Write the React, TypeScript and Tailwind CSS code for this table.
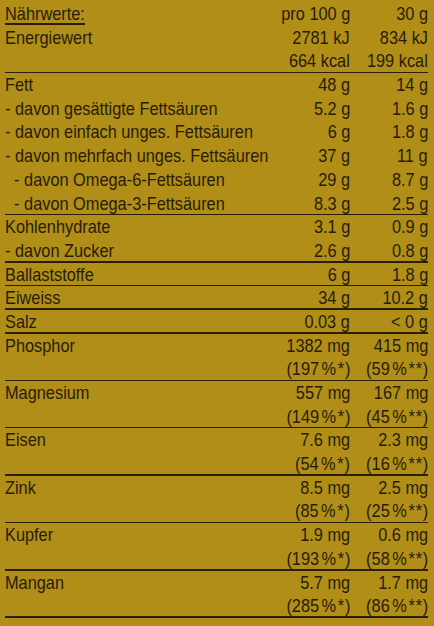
const rows: [string, string, string][][] = [
  [["Energiewert", "2781 kJ", "834 kJ"], ["", "664 kcal", "199 kcal"]],
  [
    ["Fett", "48 g", "14 g"],
    ["- davon gesättigte Fettsäuren", "5.2 g", "1.6 g"],
    ["- davon einfach unges. Fettsäuren", "6 g", "1.8 g"],
    ["- davon mehrfach unges. Fettsäuren", "37 g", "11 g"],
    ["  - davon Omega-6-Fettsäuren", "29 g", "8.7 g"],
    ["  - davon Omega-3-Fettsäuren", "8.3 g", "2.5 g"],
  ],
  [["Kohlenhydrate", "3.1 g", "0.9 g"], ["- davon Zucker", "2.6 g", "0.8 g"]],
  [["Ballaststoffe", "6 g", "1.8 g"]],
  [["Eiweiss", "34 g", "10.2 g"]],
  [["Salz", "0.03 g", "< 0 g"]],
];

const minerals = [
  ["Phosphor", "1382 mg", "415 mg", "197", "59"],
  ["Magnesium", "557 mg", "167 mg", "149", "45"],
  ["Eisen", "7.6 mg", "2.3 mg", "54", "16"],
  ["Zink", "8.5 mg", "2.5 mg", "85", "25"],
  ["Kupfer", "1.9 mg", "0.6 mg", "193", "58"],
  ["Mangan", "5.7 mg", "1.7 mg", "285", "86"],
];

// narrow Helvetica look: Liberation Sans squeezed horizontally
function Narrow({ children, right }: { children: React.ReactNode; right?: boolean }) {
  return (
    <span className={`inline-block scale-x-[0.86] ${right ? "origin-right" : "origin-left"}`}>{children}</span>
  );
}

function Row({ a, b, c }: { a: React.ReactNode; b: React.ReactNode; c: React.ReactNode }) {
  return (
    <div className="grid grid-cols-[minmax(0,1fr)_100px_78px] h-[23.7px] leading-[23.7px] whitespace-pre">
      <span><Narrow>{a}</Narrow></span>
      <span className="text-right"><Narrow right>{b}</Narrow></span>
      <span className="text-right"><Narrow right>{c}</Narrow></span>
    </div>
  );
}

function Line() {
  return <div className="h-[1.5px] -mt-[1.5px] bg-[#2a1e07]" />;
}

function Pct({ v, stars }: { v: string; stars: string }) {
  return (
    <>
      ({v}
      <span className="tracking-[-1px]">{"\u2009"}</span>%<span className="pl-[2px] tracking-[1px]">{stars}</span>)
    </>
  );
}

export default function App() {
  return (
    <div className="h-[626px] w-[434px] overflow-hidden bg-[#b08e18] text-[#281c06] text-[19px] pl-[5px] pr-[6px] pt-[2px] font-['Liberation_Sans',Arial,sans-serif]">
      <Row
        a={<span className="underline decoration-[1.5px] underline-offset-[3px]">Nährwerte:</span>}
        b="pro 100 g"
        c="30 g"
      />
      {rows.map((g, i) => (
        <div key={i}>
          {g.map(([a, b, c], j) => (
            <Row key={j} a={a} b={b} c={c} />
          ))}
          <Line />
        </div>
      ))}
      {minerals.map(([n, b, c, p1, p2]) => (
        <div key={n}>
          <Row a={n} b={b} c={c} />
          <Row a="" b={<Pct v={p1} stars="*" />} c={<Pct v={p2} stars="**" />} />
          <Line />
        </div>
      ))}
    </div>
  );
}
